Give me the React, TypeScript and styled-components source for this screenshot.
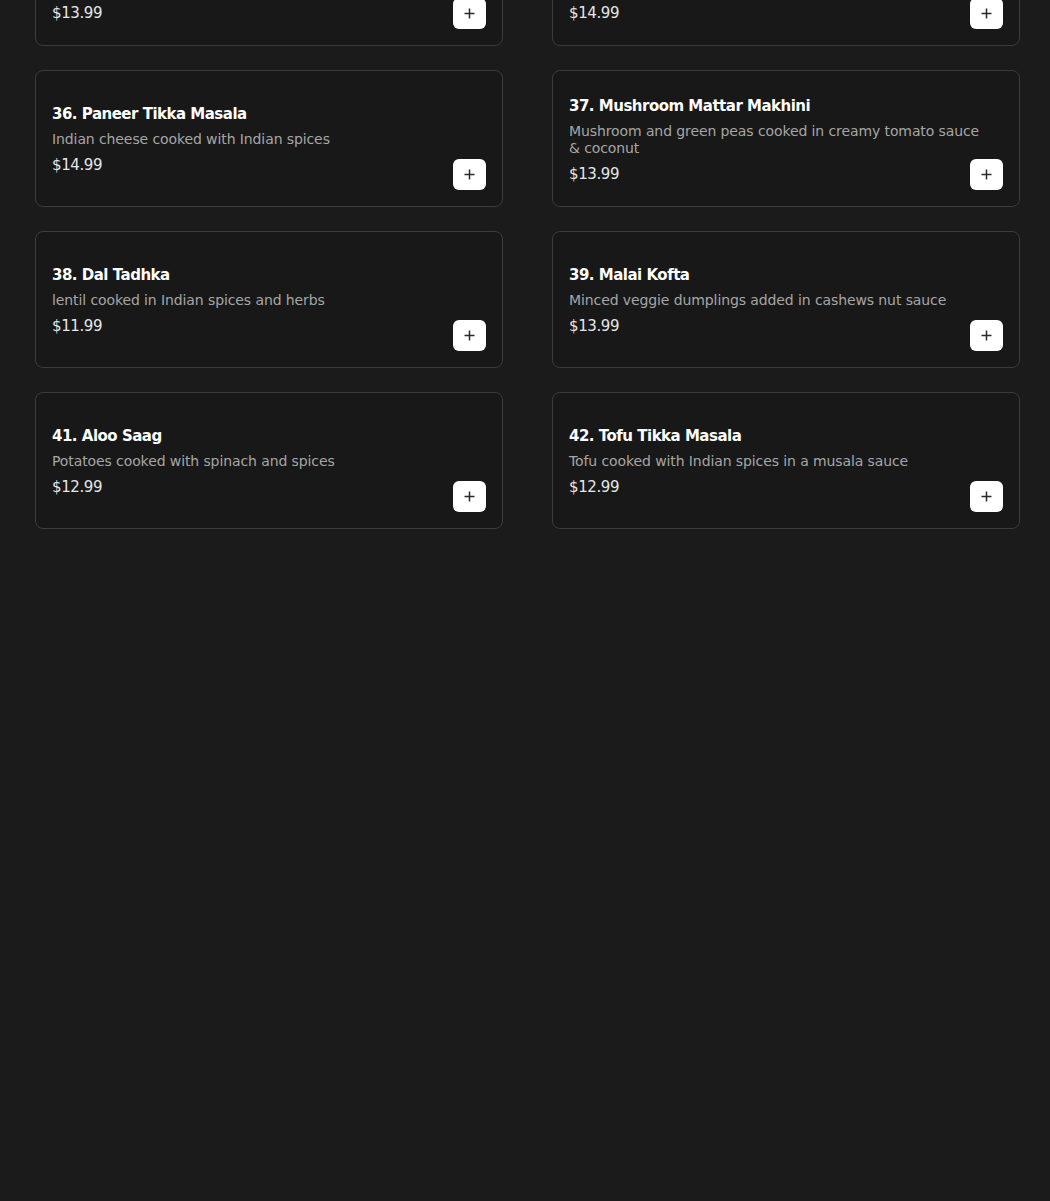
import React from 'react';
import styled, { createGlobalStyle } from 'styled-components';

const GlobalStyle = createGlobalStyle`
  html, body {
    margin: 0;
    padding: 0;
    background: #1b1b1b;
  }
  body {
    font-family: "DejaVu Sans", "Open Sans", sans-serif;
    overflow: hidden;
  }
`;

const Page = styled.main`
  min-height: 1201px;
  background: #1b1b1b;
  padding: 0 30px 0 35px;
  box-sizing: border-box;
`;

const MenuGrid = styled.div`
  display: grid;
  grid-template-columns: 468px 468px;
  column-gap: 49px;
  row-gap: 24px;
  margin-top: -91px;
`;

const Card = styled.div`
  position: relative;
  box-sizing: border-box;
  height: 137px;
  display: flex;
  align-items: center;
  padding: 18px 16px 16px;
  background: #181818;
  border: 1px solid #3c3c3c;
  border-radius: 8px;
`;

const Info = styled.div`
  flex: 1;
  display: flex;
  flex-direction: column;
  padding-right: 16px;
`;

const Title = styled.h3`
  margin: 0 0 7px;
  font-size: 15px;
  font-weight: 700;
  color: #ffffff;
  line-height: 20px;
  letter-spacing: -0.5px;
`;

const Description = styled.p`
  margin: 0 0 7px;
  font-size: 14px;
  color: #a6a6a6;
  line-height: 17px;
  letter-spacing: -0.1px;
`;

const Price = styled.span`
  font-size: 15px;
  color: #e6e6e6;
  line-height: 20px;
  letter-spacing: -0.4px;
`;

const AddButton = styled.button`
  position: absolute;
  right: 16px;
  bottom: 16px;
  width: 33px;
  height: 31px;
  padding: 0;
  border: none;
  border-radius: 6px;
  background: #ffffff;
  display: flex;
  align-items: center;
  justify-content: center;
  cursor: pointer;
`;

const PlusIcon = () => (
  <svg width="11" height="11" viewBox="0 0 11 11" aria-hidden="true">
    <path d="M5.5 0.5v10M0.5 5.5h10" stroke="#2a2a2a" strokeWidth="1.5" fill="none" />
  </svg>
);

const items = [
  { title: '34. Chana Masala', description: 'Chickpeas cooked with onion, tomato, ginger, garlic and a blend of Indian spices', price: '$13.99' },
  { title: '35. Vegetable Korma', description: 'Mixed vegetables cooked in a creamy cashew sauce with raisins and mild spices', price: '$14.99' },
  { title: '36. Paneer Tikka Masala', description: 'Indian cheese cooked with Indian spices', price: '$14.99' },
  { title: '37. Mushroom Mattar Makhini', description: 'Mushroom and green peas cooked in creamy tomato sauce & coconut', price: '$13.99' },
  { title: '38. Dal Tadhka', description: 'lentil cooked in Indian spices and herbs', price: '$11.99' },
  { title: '39. Malai Kofta', description: 'Minced veggie dumplings added in cashews nut sauce', price: '$13.99' },
  { title: '41. Aloo Saag', description: 'Potatoes cooked with spinach and spices', price: '$12.99' },
  { title: '42. Tofu Tikka Masala', description: 'Tofu cooked with Indian spices in a musala sauce', price: '$12.99' },
];

export default function App() {
  return (
    <>
      <GlobalStyle />
      <Page>
        <MenuGrid>
          {items.map((item) => (
            <Card key={item.title}>
              <Info>
                <Title>{item.title}</Title>
                <Description>{item.description}</Description>
                <Price>{item.price}</Price>
              </Info>
              <AddButton aria-label={`Add ${item.title}`}>
                <PlusIcon />
              </AddButton>
            </Card>
          ))}
        </MenuGrid>
      </Page>
    </>
  );
}
